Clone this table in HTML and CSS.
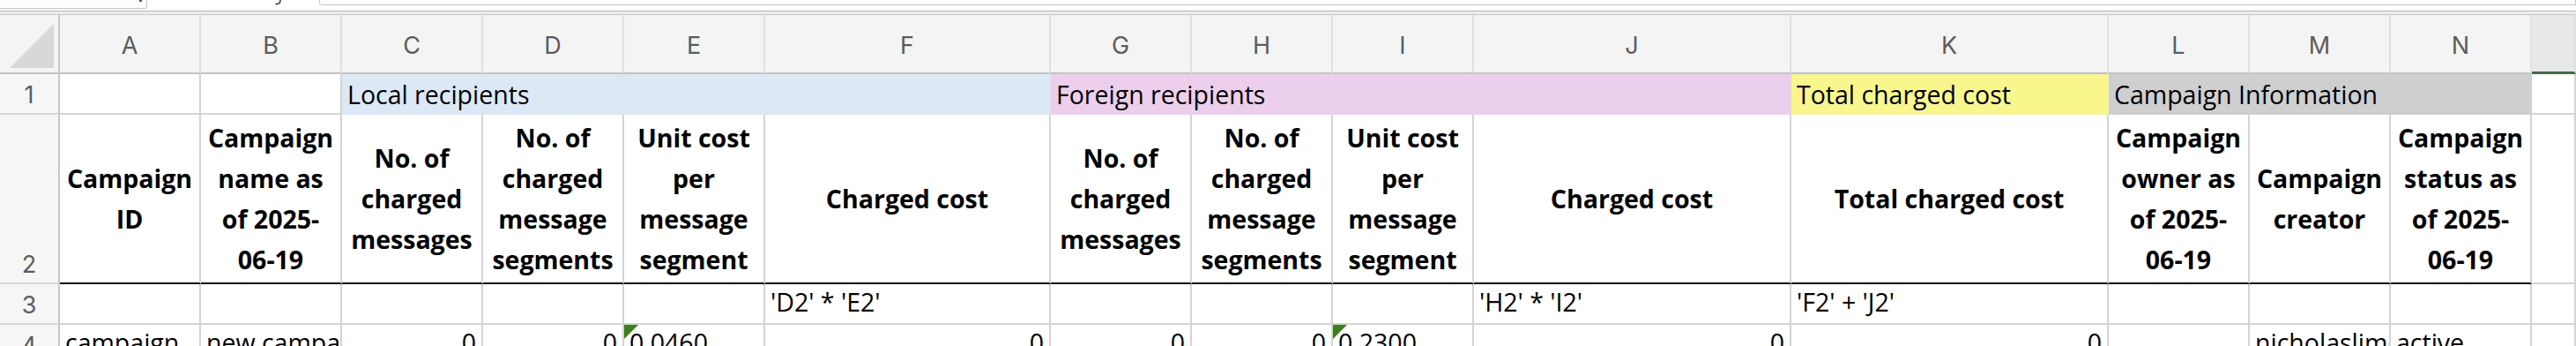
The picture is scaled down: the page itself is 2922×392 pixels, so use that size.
FILE: index.html
```html
<!DOCTYPE html>
<html lang="en">
<head>
<meta charset="utf-8">
<title>Campaign cost sheet</title>
<link rel="stylesheet" href="styles.css">
</head>
<body>
<div class="app">
  <div class="formula-bar">
    <div class="name-box"><span class="chev"></span></div>
    <svg class="fx" width="12" height="6" viewBox="0 0 12 6"><path d="M8 0 C8 3.5 6 5 2.5 4.5" fill="none" stroke="#333" stroke-width="1.6"/></svg>
    <div class="formula-input"></div>
  </div>
  <div class="split"></div>
  <div class="sheet">
    <div class="corner"><svg width="50" height="50" viewBox="0 0 50 50"><polygon points="50,0 50,50 0,50" fill="#d8d8d8"/></svg></div>
    <div class="col-h">A</div>
    <div class="col-h">B</div>
    <div class="col-h">C</div>
    <div class="col-h">D</div>
    <div class="col-h">E</div>
    <div class="col-h">F</div>
    <div class="col-h">G</div>
    <div class="col-h">H</div>
    <div class="col-h">I</div>
    <div class="col-h">J</div>
    <div class="col-h">K</div>
    <div class="col-h">L</div>
    <div class="col-h">M</div>
    <div class="col-h">N</div>
    <div class="col-h col-sel"></div>

    <div class="row-h">1</div>
    <div class="cell r1"></div>
    <div class="cell r1"></div>
    <div class="cell r1 grp blue span4">Local recipients</div>
    <div class="cell r1 grp pink span4">Foreign recipients</div>
    <div class="cell r1 grp yellow">Total charged cost</div>
    <div class="cell r1 grp gray span3">Campaign Information</div>
    <div class="cell r1"></div>

    <div class="row-h">2</div>
    <div class="cell hd">Campaign<br>ID</div>
    <div class="cell hd">Campaign<br>name as<br>of 2025-<br>06-19</div>
    <div class="cell hd">No. of<br>charged<br>messages</div>
    <div class="cell hd">No. of<br>charged<br>message<br>segments</div>
    <div class="cell hd">Unit cost<br>per<br>message<br>segment</div>
    <div class="cell hd">Charged cost</div>
    <div class="cell hd">No. of<br>charged<br>messages</div>
    <div class="cell hd">No. of<br>charged<br>message<br>segments</div>
    <div class="cell hd">Unit cost<br>per<br>message<br>segment</div>
    <div class="cell hd">Charged cost</div>
    <div class="cell hd">Total charged cost</div>
    <div class="cell hd">Campaign<br>owner as<br>of 2025-<br>06-19</div>
    <div class="cell hd">Campaign<br>creator</div>
    <div class="cell hd">Campaign<br>status as<br>of 2025-<br>06-19</div>
    <div class="cell"></div>

    <div class="row-h">3</div>
    <div class="cell r3"></div>
    <div class="cell r3"></div>
    <div class="cell r3"></div>
    <div class="cell r3"></div>
    <div class="cell r3"></div>
    <div class="cell r3">'D2' * 'E2'</div>
    <div class="cell r3"></div>
    <div class="cell r3"></div>
    <div class="cell r3"></div>
    <div class="cell r3">'H2' * 'I2'</div>
    <div class="cell r3">'F2' + 'J2'</div>
    <div class="cell r3"></div>
    <div class="cell r3"></div>
    <div class="cell r3"></div>
    <div class="cell r3"></div>

    <div class="row-h">4</div>
    <div class="cell r4">campaign</div>
    <div class="cell r4">new campaign</div>
    <div class="cell r4 num">0</div>
    <div class="cell r4 num">0</div>
    <div class="cell r4"><span class="tri"></span>0.0460</div>
    <div class="cell r4 num">0</div>
    <div class="cell r4 num">0</div>
    <div class="cell r4 num">0</div>
    <div class="cell r4"><span class="tri"></span>0.2300</div>
    <div class="cell r4 num">0</div>
    <div class="cell r4 num">0</div>
    <div class="cell r4"></div>
    <div class="cell r4">nicholaslim@example.com</div>
    <div class="cell r4">active</div>
    <div class="cell r4"></div>
  </div>
</div>
</body>
</html>
```
FILE: styles.css
```css
* {
  box-sizing: border-box;
  margin: 0;
  padding: 0;
}

html,
body {
  width: 2922px;
  height: 392px;
  overflow: hidden;
  background: #ffffff;
}

body {
  font-family: "Open Sans", "Noto Sans", sans-serif;
  color: #000000;
}

.app {
  display: flex;
  flex-direction: column;
  width: 2922px;
  height: 392px;
  overflow: hidden;
}

/* formula bar (cut off at top) */
.formula-bar {
  flex: none;
  height: 12px;
  display: flex;
  align-items: flex-start;
  background: #ffffff;
}

.name-box {
  width: 167px;
  height: 10px;
  border-right: 1px solid #c4c4c4;
  border-bottom: 1px solid #c4c4c4;
  border-bottom-right-radius: 3px;
  display: flex;
  justify-content: flex-end;
  padding-right: 5px;
}

.chev {
  width: 3px;
  height: 2px;
  background: #555555;
}

.fx {
  flex: none;
  margin-left: 143px;
}

.formula-input {
  flex: 1;
  margin-left: 40px;
  height: 6px;
  border: 1px solid #c4c4c4;
  border-top: none;
  border-bottom-left-radius: 4px;
}

.split {
  flex: none;
  height: 5px;
  border-top: 1px solid #b8b8b8;
  border-bottom: 1px solid #c6c6c6;
  background: #ededed;
}

/* sheet grid */
.sheet {
  flex: none;
  display: grid;
  grid-template-columns: 68px repeat(5, 160px) 324px repeat(3, 160px) 360px 360px repeat(3, 160px) 1fr;
  grid-template-rows: 67px 46px 192px 46px 46px;
}

.corner {
  background: #f4f4f4;
  border-right: 2px solid #c6c6c6;
  border-bottom: 2px solid #c3c3c3;
  display: flex;
  justify-content: flex-end;
  align-items: flex-end;
  padding: 0 5px 5px 0;
}

.col-h {
  background: #f4f4f4;
  border-right: 2px solid #e0e0e0;
  border-bottom: 2px solid #c3c3c3;
  font-family: Inter, "Liberation Sans", sans-serif;
  font-size: 27px;
  line-height: 32px;
  color: #5c5c5c;
  text-align: center;
  padding-top: 19px;
}

.col-sel {
  background: #e8e8e8;
  border-bottom: 3px solid #2f7540;
}

.row-h {
  background: #f6f6f6;
  border-right: 2px solid #c6c6c6;
  border-bottom: 2px solid #d6d6d6;
  font-family: Inter, "Liberation Sans", sans-serif;
  font-size: 27px;
  line-height: 32px;
  color: #5c5c5c;
  display: flex;
  justify-content: center;
  align-items: flex-end;
  padding-bottom: 4px;
}

.cell {
  position: relative;
  background: #ffffff;
  border-right: 2px solid #d4d4d4;
  border-bottom: 2px solid #d4d4d4;
  padding: 0 6px;
  font-size: 28.5px;
  line-height: 40px;
  white-space: nowrap;
  overflow: hidden;
}

.r1 {
  padding-top: 3px;
}

.r3,
.r4 {
  padding-top: 0;
}

.num {
  text-align: right;
}

.grp {
  border-right-color: transparent;
  border-bottom-color: transparent;
}

.span3 {
  grid-column: span 3;
}

.span4 {
  grid-column: span 4;
}

.blue {
  background: #dde8f7;
}

.pink {
  background: #eccfed;
}

.yellow {
  background: #f8f68c;
}

.gray {
  background: #cfcfcf;
}

.hd {
  display: flex;
  align-items: center;
  justify-content: center;
  text-align: center;
  font-weight: 700;
  line-height: 46px;
  white-space: normal;
  padding: 0 2px;
  border-bottom: 2px solid #000000;
}

.tri {
  position: absolute;
  left: 0;
  top: 0;
  width: 0;
  height: 0;
  border-top: 16px solid #3e7d22;
  border-right: 16px solid transparent;
}
```
